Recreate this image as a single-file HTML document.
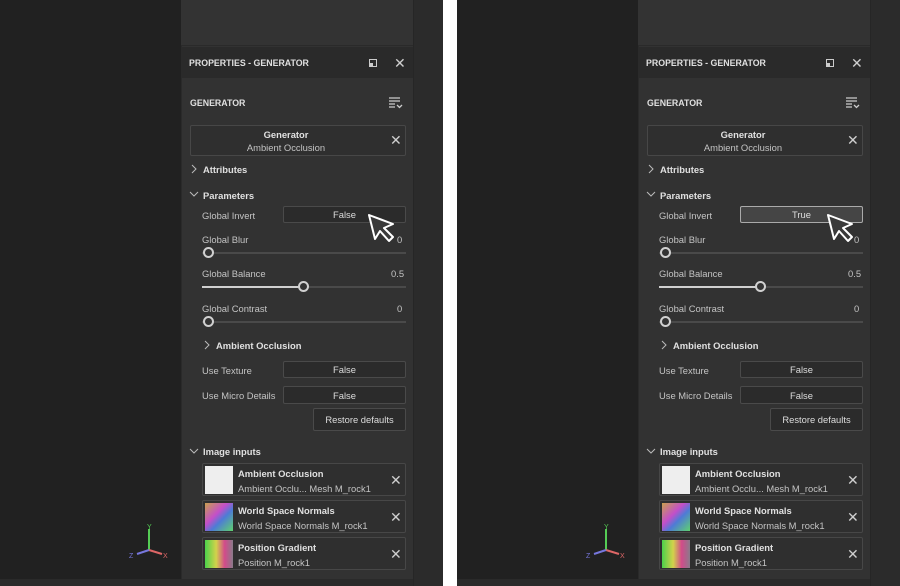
<!DOCTYPE html>
<html><head><meta charset="utf-8"><style>
*{margin:0;padding:0;box-sizing:border-box}
body{width:900px;height:586px;background:#fff;position:relative;overflow:hidden;font-family:"Liberation Sans",sans-serif;color:#d6d6d6;font-size:9.4px}
.half{position:absolute;top:0;width:443px;height:586px;background:#212121;overflow:hidden}
.a{position:absolute}
.panel{left:181px;top:0;width:232px;height:586px;background:#323232;border-left:1px solid #2a2a2a}
.strip{left:413px;top:0;width:30px;height:586px;background:#2b2b2b;border-left:1px solid #262626}
.hdr{left:181px;top:47px;width:232px;height:31px;background:#2a2a2a}
.b{font-weight:bold;color:#e0e0e0}
.box{border:1px solid #474747;border-radius:2px;background:#2f2f2f}
.btn{border:1px solid #4a4a4a;border-radius:2px;background:#2b2b2b;text-align:center;color:#ddd}
.track{height:2px;background:#4a4a4a}
.knob{width:11px;height:11px;border-radius:50%;border:2px solid #d0d0d0;background:#333}
.x{font-size:14px;color:#cfcfcf}
.thumb{width:28px;height:28px}
.lbl{color:#c4c4c4}
</style></head><body>

<div class="half" style="left:0">
<div class="a panel"></div><div class="a strip"></div>
<div class="a" style="left:181px;top:0;width:232px;height:46px;background:#333;border-bottom:1px solid #2a2a2a"></div>
<div class="a hdr"></div>
<div class="a b" style="left:189px;top:58px;font-size:8.8px">PROPERTIES - GENERATOR</div>
<div class="a" style="left:369px;top:59px;width:8px;height:8px;border:1px solid #ccc"></div><div class="a" style="left:370px;top:63px;width:3px;height:3px;background:#ccc"></div>
<div class="a x" style="left:394px;top:55px">✕</div>
<div class="a b" style="left:190px;top:98px;font-size:8.8px">GENERATOR</div>
<svg class="a" style="left:389px;top:97px" width="14" height="12"><path d="M0 1h11M0 4h11M0 7h6M0 10h6M8 8l2.5 2.5L13 8" stroke="#ccc" stroke-width="1.3" fill="none"/></svg>
<div class="a box" style="left:190px;top:125px;width:216px;height:31px"></div>
<div class="a b" style="left:190px;top:129px;width:192px;text-align:center">Generator</div>
<div class="a lbl" style="left:190px;top:142px;width:192px;text-align:center">Ambient Occlusion</div>
<div class="a x" style="left:390px;top:132px">✕</div>
<svg class="a" style="left:190px;top:164px" width="8" height="10"><path d="M2 1l4 4-4 4" stroke="#bbb" fill="none"/></svg><div class="a b" style="left:203px;top:164px">Attributes</div>
<svg class="a" style="left:189px;top:190px" width="10" height="8"><path d="M1 2l4 4 4-4" stroke="#bbb" fill="none"/></svg><div class="a b" style="left:203px;top:190px">Parameters</div>
<div class="a lbl" style="left:202px;top:210px">Global Invert</div>
<div class="a btn" style="left:283px;top:206px;width:123px;height:17px;line-height:16px">False</div>
<div class="a lbl" style="left:202px;top:234px">Global Blur</div><div class="a lbl" style="left:397px;top:234px">0</div>
<div class="a track" style="left:202px;top:252px;width:204px"></div><div class="a knob" style="left:203px;top:247px"></div>
<div class="a lbl" style="left:202px;top:268px">Global Balance</div><div class="a lbl" style="left:391px;top:268px">0.5</div>
<div class="a track" style="left:202px;top:286px;width:204px"></div><div class="a" style="left:202px;top:286px;width:100px;height:2px;background:#d0d0d0"></div><div class="a knob" style="left:298px;top:281px"></div>
<div class="a lbl" style="left:202px;top:303px">Global Contrast</div><div class="a lbl" style="left:397px;top:303px">0</div>
<div class="a track" style="left:202px;top:321px;width:204px"></div><div class="a knob" style="left:203px;top:316px"></div>
<svg class="a" style="left:203px;top:340px" width="8" height="10"><path d="M2 1l4 4-4 4" stroke="#bbb" fill="none"/></svg><div class="a b" style="left:216px;top:340px">Ambient Occlusion</div>
<div class="a lbl" style="left:202px;top:365px">Use Texture</div>
<div class="a btn" style="left:283px;top:361px;width:123px;height:17px;line-height:16px">False</div>
<div class="a lbl" style="left:202px;top:390px">Use Micro Details</div>
<div class="a btn" style="left:283px;top:386px;width:123px;height:18px;line-height:17px">False</div>
<div class="a btn" style="left:313px;top:408px;width:93px;height:23px;line-height:22px">Restore defaults</div>
<svg class="a" style="left:189px;top:447px" width="10" height="8"><path d="M1 2l4 4 4-4" stroke="#bbb" fill="none"/></svg><div class="a b" style="left:203px;top:446px">Image inputs</div>
<div class="a box" style="left:202px;top:463px;width:204px;height:33px"></div>
<div class="a thumb" style="left:205px;top:466px;background:#eee"></div>
<div class="a b" style="left:238px;top:468px">Ambient Occlusion</div><div class="a lbl" style="left:238px;top:483px">Ambient Occlu... Mesh M_rock1</div><div class="a x" style="left:390px;top:472px">✕</div>
<div class="a box" style="left:202px;top:500px;width:204px;height:33px"></div>
<div class="a thumb" style="left:205px;top:503px;background:linear-gradient(135deg,#c9a04d,#c34fc9 40%,#4e7bd6 60%,#5ed26e)"></div>
<div class="a b" style="left:238px;top:505px">World Space Normals</div><div class="a lbl" style="left:238px;top:520px">World Space Normals M_rock1</div><div class="a x" style="left:390px;top:509px">✕</div>
<div class="a box" style="left:202px;top:537px;width:204px;height:33px"></div>
<div class="a thumb" style="left:205px;top:540px;background:linear-gradient(90deg,#4bd24b,#d2d24b 40%,#d24b8a 70%,#8a7a8a)"></div>
<div class="a b" style="left:238px;top:542px">Position Gradient</div><div class="a lbl" style="left:238px;top:557px">Position M_rock1</div><div class="a x" style="left:390px;top:546px">✕</div>
<div class="a" style="left:181px;top:579px;width:232px;height:7px;background:#2a2a2a"></div>
<div class="a" style="left:0;top:579px;width:181px;height:7px;background:#2a2a2a"></div>
<svg class="a" style="left:128px;top:522px" width="45" height="40"><path d="M21 7v21" stroke="#5c5" stroke-width="2"/><path d="M21 28l13 4" stroke="#d66" stroke-width="2"/><path d="M21 28l-12 4" stroke="#77d" stroke-width="2"/><text x="19" y="7" fill="#5c5" font-size="7">Y</text><text x="35" y="36" fill="#d66" font-size="7">X</text><text x="1" y="36" fill="#77d" font-size="7">Z</text></svg>
<svg class="a" style="left:366px;top:212px" width="30" height="32"><path d="M3 3l6 24 5-8 9 10 4-4-9-9 9-4z" fill="#3a3a3a" stroke="#fff" stroke-width="2" stroke-linejoin="round"/></svg>
</div>

<div class="half" style="left:457px">
<div class="a panel"></div><div class="a strip"></div>
<div class="a" style="left:181px;top:0;width:232px;height:46px;background:#333;border-bottom:1px solid #2a2a2a"></div>
<div class="a hdr"></div>
<div class="a b" style="left:189px;top:58px;font-size:8.8px">PROPERTIES - GENERATOR</div>
<div class="a" style="left:369px;top:59px;width:8px;height:8px;border:1px solid #ccc"></div><div class="a" style="left:370px;top:63px;width:3px;height:3px;background:#ccc"></div>
<div class="a x" style="left:394px;top:55px">✕</div>
<div class="a b" style="left:190px;top:98px;font-size:8.8px">GENERATOR</div>
<svg class="a" style="left:389px;top:97px" width="14" height="12"><path d="M0 1h11M0 4h11M0 7h6M0 10h6M8 8l2.5 2.5L13 8" stroke="#ccc" stroke-width="1.3" fill="none"/></svg>
<div class="a box" style="left:190px;top:125px;width:216px;height:31px"></div>
<div class="a b" style="left:190px;top:129px;width:192px;text-align:center">Generator</div>
<div class="a lbl" style="left:190px;top:142px;width:192px;text-align:center">Ambient Occlusion</div>
<div class="a x" style="left:390px;top:132px">✕</div>
<svg class="a" style="left:190px;top:164px" width="8" height="10"><path d="M2 1l4 4-4 4" stroke="#bbb" fill="none"/></svg><div class="a b" style="left:203px;top:164px">Attributes</div>
<svg class="a" style="left:189px;top:190px" width="10" height="8"><path d="M1 2l4 4 4-4" stroke="#bbb" fill="none"/></svg><div class="a b" style="left:203px;top:190px">Parameters</div>
<div class="a lbl" style="left:202px;top:210px">Global Invert</div>
<div class="a btn" style="left:283px;top:206px;width:123px;height:17px;line-height:16px;background:#454545;border-color:#aaa">True</div>
<div class="a lbl" style="left:202px;top:234px">Global Blur</div><div class="a lbl" style="left:397px;top:234px">0</div>
<div class="a track" style="left:202px;top:252px;width:204px"></div><div class="a knob" style="left:203px;top:247px"></div>
<div class="a lbl" style="left:202px;top:268px">Global Balance</div><div class="a lbl" style="left:391px;top:268px">0.5</div>
<div class="a track" style="left:202px;top:286px;width:204px"></div><div class="a" style="left:202px;top:286px;width:100px;height:2px;background:#d0d0d0"></div><div class="a knob" style="left:298px;top:281px"></div>
<div class="a lbl" style="left:202px;top:303px">Global Contrast</div><div class="a lbl" style="left:397px;top:303px">0</div>
<div class="a track" style="left:202px;top:321px;width:204px"></div><div class="a knob" style="left:203px;top:316px"></div>
<svg class="a" style="left:203px;top:340px" width="8" height="10"><path d="M2 1l4 4-4 4" stroke="#bbb" fill="none"/></svg><div class="a b" style="left:216px;top:340px">Ambient Occlusion</div>
<div class="a lbl" style="left:202px;top:365px">Use Texture</div>
<div class="a btn" style="left:283px;top:361px;width:123px;height:17px;line-height:16px">False</div>
<div class="a lbl" style="left:202px;top:390px">Use Micro Details</div>
<div class="a btn" style="left:283px;top:386px;width:123px;height:18px;line-height:17px">False</div>
<div class="a btn" style="left:313px;top:408px;width:93px;height:23px;line-height:22px">Restore defaults</div>
<svg class="a" style="left:189px;top:447px" width="10" height="8"><path d="M1 2l4 4 4-4" stroke="#bbb" fill="none"/></svg><div class="a b" style="left:203px;top:446px">Image inputs</div>
<div class="a box" style="left:202px;top:463px;width:204px;height:33px"></div>
<div class="a thumb" style="left:205px;top:466px;background:#eee"></div>
<div class="a b" style="left:238px;top:468px">Ambient Occlusion</div><div class="a lbl" style="left:238px;top:483px">Ambient Occlu... Mesh M_rock1</div><div class="a x" style="left:390px;top:472px">✕</div>
<div class="a box" style="left:202px;top:500px;width:204px;height:33px"></div>
<div class="a thumb" style="left:205px;top:503px;background:linear-gradient(135deg,#c9a04d,#c34fc9 40%,#4e7bd6 60%,#5ed26e)"></div>
<div class="a b" style="left:238px;top:505px">World Space Normals</div><div class="a lbl" style="left:238px;top:520px">World Space Normals M_rock1</div><div class="a x" style="left:390px;top:509px">✕</div>
<div class="a box" style="left:202px;top:537px;width:204px;height:33px"></div>
<div class="a thumb" style="left:205px;top:540px;background:linear-gradient(90deg,#4bd24b,#d2d24b 40%,#d24b8a 70%,#8a7a8a)"></div>
<div class="a b" style="left:238px;top:542px">Position Gradient</div><div class="a lbl" style="left:238px;top:557px">Position M_rock1</div><div class="a x" style="left:390px;top:546px">✕</div>
<div class="a" style="left:181px;top:579px;width:232px;height:7px;background:#2a2a2a"></div>
<div class="a" style="left:0;top:579px;width:181px;height:7px;background:#2a2a2a"></div>
<svg class="a" style="left:128px;top:522px" width="45" height="40"><path d="M21 7v21" stroke="#5c5" stroke-width="2"/><path d="M21 28l13 4" stroke="#d66" stroke-width="2"/><path d="M21 28l-12 4" stroke="#77d" stroke-width="2"/><text x="19" y="7" fill="#5c5" font-size="7">Y</text><text x="35" y="36" fill="#d66" font-size="7">X</text><text x="1" y="36" fill="#77d" font-size="7">Z</text></svg>
<svg class="a" style="left:368px;top:212px" width="30" height="32"><path d="M3 3l6 24 5-8 9 10 4-4-9-9 9-4z" fill="#3a3a3a" stroke="#fff" stroke-width="2" stroke-linejoin="round"/></svg>
</div>
</body></html>
